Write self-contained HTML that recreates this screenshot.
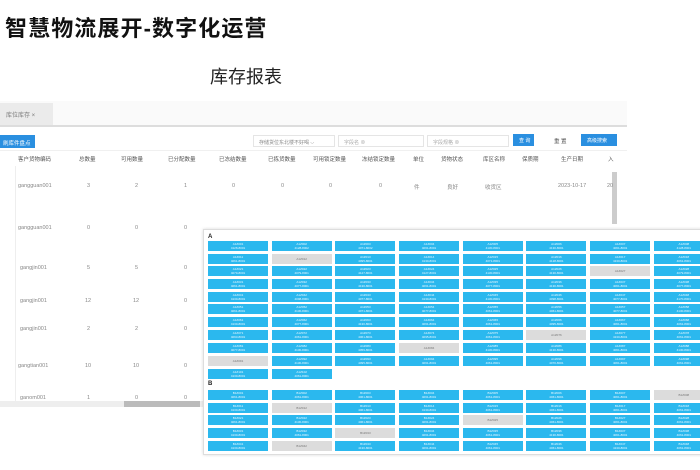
<!DOCTYPE html>
<html><head><meta charset="utf-8"><style>
*{margin:0;padding:0;box-sizing:border-box}
body{width:700px;height:470px;background:#fff;position:relative;overflow:hidden;font-family:"Liberation Sans","Noto Sans CJK SC",sans-serif}
.a{position:absolute;white-space:nowrap}
.t{font-size:5.5px;color:#888}
.h{font-size:5.5px;color:#555}
.panel{position:absolute;left:203px;top:229px;width:510px;height:226px;background:#fff;border:1px solid #ddd;box-shadow:0 0 3px rgba(0,0,0,.15)}
.row{position:absolute;left:4px;display:flex;height:10px}
.c{width:60px;height:10px;margin-right:3.7px;background:#2bb8ee;color:#e8f7ff;font-size:3px;line-height:4px;text-align:center;padding-top:1px;flex:none}
.g{background:#dcdcdc;color:#777;padding-top:3px}
.lbl{position:absolute;left:4px;font-size:6px;font-weight:bold;color:#222}
</style></head><body>
<div class="a" style="left:5px;top:11px;font-size:22px;font-weight:bold;color:#111;letter-spacing:1.1px">智慧物流展开-数字化运营</div>
<div class="a" style="left:210px;top:63px;font-size:18px;color:#222">库存报表</div>

<div class="a" style="left:0;top:101px;width:627px;height:24px;background:#fafafa"></div>
<div class="a" style="left:0;top:103px;width:53px;height:22px;background:#ebebeb;font-size:6px;color:#777;padding:7px 0 0 6px">库位库存 ×</div>
<div class="a" style="left:0;top:125px;width:627px;height:2px;background:#ddd"></div>
<div class="a" style="left:0;top:135px;width:35px;height:13px;background:#2a8fe0;color:#fff;font-size:5.5px;padding:4px 0 0 3px">刷库件盘点</div>
<div class="a" style="left:253px;top:135px;width:82px;height:12px;border:1px solid #e5e5e5;font-size:5px;color:#888;padding:3px 0 0 5px">存储货位东北楼不好喝 ⌵</div>
<div class="a" style="left:338px;top:135px;width:86px;height:12px;border:1px solid #e5e5e5;font-size:5px;color:#aaa;padding:3px 0 0 5px">字段名 ⊗</div>
<div class="a" style="left:427px;top:135px;width:82px;height:12px;border:1px solid #e5e5e5;font-size:5px;color:#aaa;padding:3px 0 0 5px">字段规格 ⊗</div>
<div class="a" style="left:513px;top:134px;width:21px;height:12px;background:#2a8fe0;color:#fff;font-size:5px;padding:3px 0 0 6px">查 询</div>
<div class="a h" style="left:554px;top:137px">重 置</div>
<div class="a" style="left:581px;top:134px;width:36px;height:12px;background:#2a8fe0;color:#fff;font-size:5px;padding:3px 0 0 6px">高级搜索</div>

<div class="a" style="left:0;top:150px;width:627px;height:252px;border-top:1px solid #f0f0f0"></div>
<div class="a h" style="left:18px;top:155px">客户货物编码</div>
<div class="a h" style="left:79px;top:155px">总数量</div>
<div class="a h" style="left:121px;top:155px">可用数量</div>
<div class="a h" style="left:168px;top:155px">已分配数量</div>
<div class="a h" style="left:219px;top:155px">已冻结数量</div>
<div class="a h" style="left:268px;top:155px">已拣货数量</div>
<div class="a h" style="left:313px;top:155px">可用锁定数量</div>
<div class="a h" style="left:362px;top:155px">冻结锁定数量</div>
<div class="a h" style="left:413px;top:155px">单位</div>
<div class="a h" style="left:441px;top:155px">货物状态</div>
<div class="a h" style="left:483px;top:155px">库区名称</div>
<div class="a h" style="left:522px;top:155px">保质期</div>
<div class="a h" style="left:561px;top:155px">生产日期</div>
<div class="a h" style="left:608px;top:155px">入</div>
<div class="a" style="left:15px;top:166px;width:1px;height:236px;background:#eee"></div>
<div class="a" style="left:612px;top:172px;width:5px;height:52px;background:#ccc"></div>

<div class="a t" style="left:18px;top:183px">gangguan001</div><div class="a t" style="left:87px;top:183px">3</div><div class="a t" style="left:135px;top:183px">2</div><div class="a t" style="left:184px;top:183px">1</div><div class="a t" style="left:232px;top:183px">0</div><div class="a t" style="left:281px;top:183px">0</div><div class="a t" style="left:329px;top:183px">0</div><div class="a t" style="left:379px;top:183px">0</div><div class="a t" style="left:414px;top:183px">件</div><div class="a t" style="left:447px;top:183px">良好</div><div class="a t" style="left:485px;top:183px">收货区</div><div class="a t" style="left:558px;top:183px">2023-10-17</div><div class="a t" style="left:607px;top:183px">20</div>
<div class="a t" style="left:18px;top:225px">gangguan001</div><div class="a t" style="left:87px;top:225px">0</div><div class="a t" style="left:135px;top:225px">0</div><div class="a t" style="left:184px;top:225px">0</div>
<div class="a t" style="left:20px;top:265px">gangjin001</div><div class="a t" style="left:87px;top:265px">5</div><div class="a t" style="left:135px;top:265px">5</div><div class="a t" style="left:184px;top:265px">0</div>
<div class="a t" style="left:20px;top:298px">gangjin001</div><div class="a t" style="left:85px;top:298px">12</div><div class="a t" style="left:133px;top:298px">12</div><div class="a t" style="left:184px;top:298px">0</div>
<div class="a t" style="left:20px;top:326px">gangjin001</div><div class="a t" style="left:87px;top:326px">2</div><div class="a t" style="left:135px;top:326px">2</div><div class="a t" style="left:184px;top:326px">0</div>
<div class="a t" style="left:18px;top:363px">gangtian001</div><div class="a t" style="left:85px;top:363px">10</div><div class="a t" style="left:133px;top:363px">10</div><div class="a t" style="left:184px;top:363px">0</div>
<div class="a t" style="left:20px;top:395px">ganom001</div><div class="a t" style="left:87px;top:395px">1</div><div class="a t" style="left:135px;top:395px">0</div><div class="a t" style="left:184px;top:395px">0</div>
<div class="a" style="left:0;top:401px;width:210px;height:6px;background:#eee"></div>
<div class="a" style="left:124px;top:401px;width:76px;height:6px;background:#bbb"></div>

<div class="panel">
<div class="lbl" style="top:4px">A</div>
<div class="row" style="top:11px"><div class="c">A1Z001<br>4128-8001</div><div class="c">A1Z002<br>4128-8002</div><div class="c">A1Z003<br>4071-8002</div><div class="c">A1Z004<br>4061-8001</div><div class="c">A1Z005<br>4130-8001</div><div class="c">A1Z006<br>4130-8001</div><div class="c">A1Z007<br>4061-8001</div><div class="c">A1Z008<br>4128-8001</div></div>
<div class="row" style="top:24px"><div class="c">A1Z011<br>4061-8001</div><div class="c g">A1Z012</div><div class="c">A1Z013<br>4095-8001</div><div class="c">A1Z014<br>4130-8001</div><div class="c">A1Z015<br>4071-8001</div><div class="c">A1Z016<br>4128-8001</div><div class="c">A1Z017<br>4130-8001</div><div class="c">A1Z018<br>4061-8001</div></div>
<div class="row" style="top:36px"><div class="c">A1Z021<br>4079-8001</div><div class="c">A1Z022<br>4079-8001</div><div class="c">A1Z023<br>4127-8001</div><div class="c">A1Z024<br>4127-8001</div><div class="c">A1Z025<br>4130-8001</div><div class="c">A1Z026<br>4130-8001</div><div class="c g">A1Z027</div><div class="c">A1Z028<br>4079-8001</div></div>
<div class="row" style="top:49px"><div class="c">A1Z031<br>4061-8001</div><div class="c">A1Z032<br>4077-8001</div><div class="c">A1Z033<br>4130-8001</div><div class="c">A1Z034<br>4061-8001</div><div class="c">A1Z035<br>4077-8001</div><div class="c">A1Z036<br>4130-8001</div><div class="c">A1Z037<br>4061-8001</div><div class="c">A1Z038<br>4077-8001</div></div>
<div class="row" style="top:62px"><div class="c">A1Z041<br>4130-8001</div><div class="c">A1Z042<br>4098-8001</div><div class="c">A1Z043<br>4077-8001</div><div class="c">A1Z044<br>4130-8001</div><div class="c">A1Z045<br>4130-8001</div><div class="c">A1Z046<br>4098-8001</div><div class="c">A1Z047<br>4077-8001</div><div class="c">A1Z048<br>4170-8001</div></div>
<div class="row" style="top:74px"><div class="c">A1Z051<br>4061-8001</div><div class="c">A1Z052<br>4130-8001</div><div class="c">A1Z053<br>4071-8001</div><div class="c">A1Z054<br>4077-8001</div><div class="c">A1Z055<br>4061-8001</div><div class="c">A1Z056<br>4061-8001</div><div class="c">A1Z057<br>4077-8001</div><div class="c">A1Z058<br>4130-8001</div></div>
<div class="row" style="top:87px"><div class="c">A1Z061<br>4130-8001</div><div class="c">A1Z062<br>4077-8001</div><div class="c">A1Z063<br>4130-8001</div><div class="c">A1Z064<br>4061-8001</div><div class="c">A1Z065<br>4061-8001</div><div class="c">A1Z066<br>4095-8001</div><div class="c">A1Z067<br>4061-8001</div><div class="c">A1Z068<br>4061-8001</div></div>
<div class="row" style="top:100px"><div class="c">A1Z071<br>4093-8001</div><div class="c">A1Z072<br>4061-8001</div><div class="c">A1Z073<br>4061-8001</div><div class="c">A1Z074<br>4095-8001</div><div class="c">A1Z075<br>4061-8001</div><div class="c g">A1Z076</div><div class="c">A1Z077<br>4130-8001</div><div class="c">A1Z078<br>4061-8001</div></div>
<div class="row" style="top:113px"><div class="c">A1Z081<br>4077-8001</div><div class="c">A1Z082<br>4130-8001</div><div class="c">A1Z083<br>4059-8001</div><div class="c g">A1Z084</div><div class="c">A1Z085<br>4130-8001</div><div class="c">A1Z086<br>4130-8001</div><div class="c">A1Z087<br>4061-8001</div><div class="c">A1Z088<br>4130-8001</div></div>
<div class="row" style="top:126px"><div class="c g">A1Z091</div><div class="c">A1Z092<br>4130-8001</div><div class="c">A1Z093<br>4095-8001</div><div class="c">A1Z094<br>4061-8001</div><div class="c">A1Z095<br>4061-8001</div><div class="c">A1Z096<br>4070-8001</div><div class="c">A1Z097<br>4061-8001</div><div class="c">A1Z098<br>4061-8001</div></div>
<div class="row" style="top:139px"><div class="c">A1Z101<br>4130-8001</div><div class="c">A1Z102<br>4061-8001</div></div>
<div class="lbl" style="top:151px">B</div>
<div class="row" style="top:160px"><div class="c">B1Z001<br>4061-8001</div><div class="c">B1Z002<br>4061-8001</div><div class="c">B1Z003<br>4061-8001</div><div class="c">B1Z004<br>4061-8001</div><div class="c">B1Z005<br>4061-8001</div><div class="c">B1Z006<br>4061-8001</div><div class="c">B1Z007<br>4061-8001</div><div class="c g">B1Z008</div></div>
<div class="row" style="top:173px"><div class="c">B1Z011<br>4130-8001</div><div class="c g">B1Z012</div><div class="c">B1Z013<br>4061-8001</div><div class="c">B1Z014<br>4130-8001</div><div class="c">B1Z015<br>4061-8001</div><div class="c">B1Z016<br>4061-8001</div><div class="c">B1Z017<br>4061-8001</div><div class="c">B1Z018<br>4061-8001</div></div>
<div class="row" style="top:185px"><div class="c">B1Z021<br>4061-8001</div><div class="c">B1Z022<br>4130-8001</div><div class="c">B1Z023<br>4061-8001</div><div class="c">B1Z024<br>4061-8001</div><div class="c g">B1Z025</div><div class="c">B1Z026<br>4061-8001</div><div class="c">B1Z027<br>4061-8001</div><div class="c">B1Z028<br>4061-8001</div></div>
<div class="row" style="top:198px"><div class="c">B1Z031<br>4130-8001</div><div class="c">B1Z032<br>4061-8001</div><div class="c g">B1Z033</div><div class="c">B1Z034<br>4061-8001</div><div class="c">B1Z035<br>4061-8001</div><div class="c">B1Z036<br>4130-8001</div><div class="c">B1Z037<br>4061-8001</div><div class="c">B1Z038<br>4061-8001</div></div>
<div class="row" style="top:211px"><div class="c">B1Z041<br>4130-8001</div><div class="c g">B1Z042</div><div class="c">B1Z043<br>4130-8001</div><div class="c">B1Z044<br>4061-8001</div><div class="c">B1Z045<br>4061-8001</div><div class="c">B1Z046<br>4061-8001</div><div class="c">B1Z047<br>4130-8001</div><div class="c">B1Z048<br>4061-8001</div></div>
</div>
</body></html>
